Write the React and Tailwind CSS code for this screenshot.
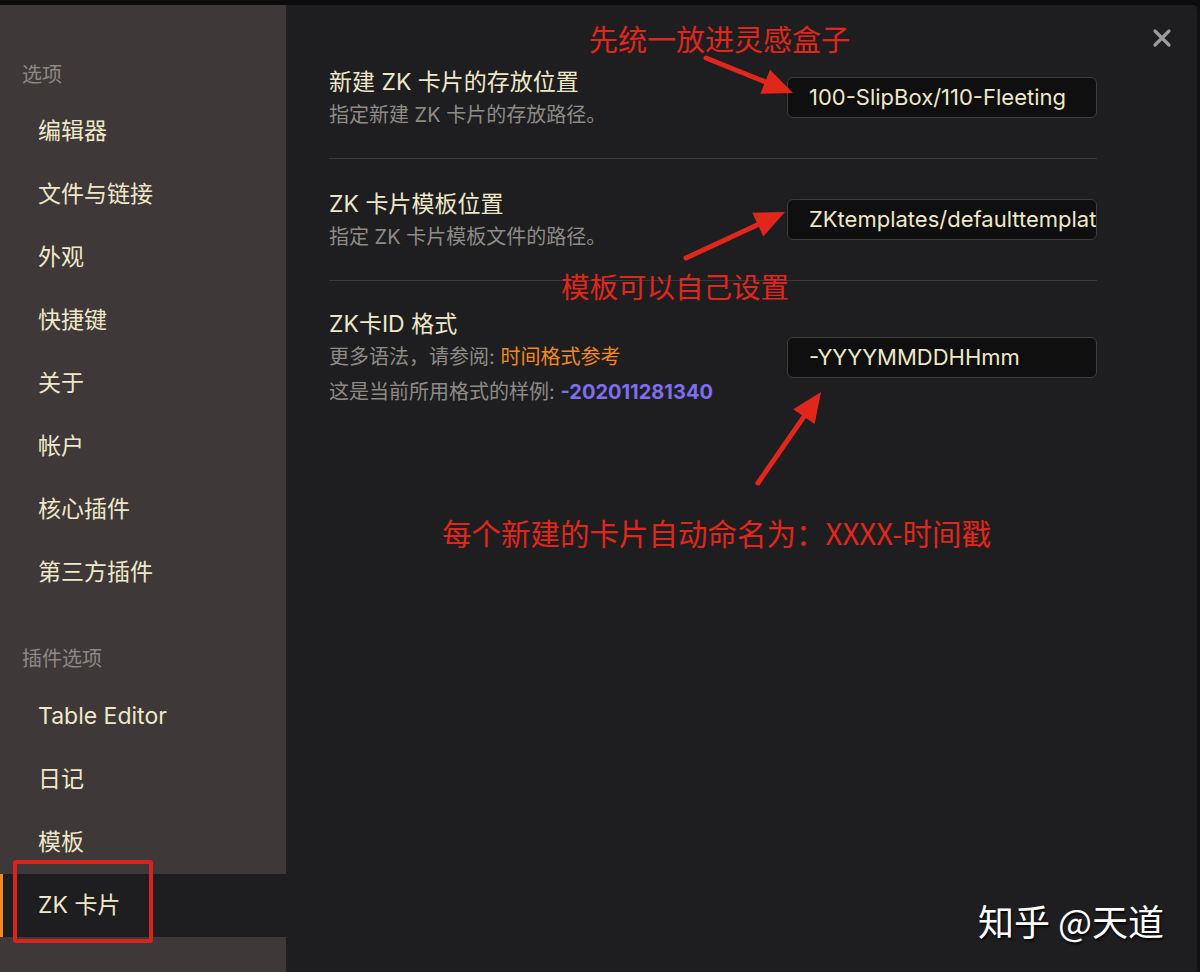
import React from "react";

const FONT = { fontFamily: "Inter, 'Noto Sans CJK SC', sans-serif" };
const CJK = { fontFamily: "'Noto Sans CJK SC', sans-serif" };

function Arrow({ x1, y1, x2, y2 }) {
  const dx = x2 - x1;
  const dy = y2 - y1;
  const len = Math.sqrt(dx * dx + dy * dy);
  const ux = dx / len;
  const uy = dy / len;
  const L = 30;
  const W = 13;
  const bx = x2 - ux * L;
  const by = y2 - uy * L;
  const p1 = `${x2},${y2}`;
  const p2 = `${bx - uy * W},${by + ux * W}`;
  const p3 = `${bx + uy * W},${by - ux * W}`;
  const lx = x2 - ux * (L - 4);
  const ly = y2 - uy * (L - 4);
  return (
    <g>
      <line x1={x1} y1={y1} x2={lx} y2={ly} stroke="#e1261c" strokeWidth="5" strokeLinecap="round" />
      <polygon points={`${p1} ${p2} ${p3}`} fill="#e1261c" />
    </g>
  );
}

function NavItem({ label, active }) {
  return (
    <div
      className={
        "relative h-[63px] flex items-center pl-[38px] text-[23px] text-[#eee8c9] " +
        (active ? "bg-[#1e1e20]" : "")
      }
    >
      {active && <div className="absolute left-0 top-0 h-full w-[3px] bg-[#f08a24]" />}
      {label}
    </div>
  );
}

function Input({ value }) {
  return (
    <div className="w-[310px] h-[41px] rounded-[6px] border border-[#3d3d3d] bg-[#0f0f10] pl-[21px] flex items-center overflow-hidden whitespace-nowrap text-[22px] text-[#eee8c9]">
      {value}
    </div>
  );
}

export default function App() {
  return (
    <div className="relative w-[1200px] h-[972px] bg-[#0c0c0c] flex flex-col overflow-hidden" style={FONT}>
      <div className="h-[5px] shrink-0" />
      <div className="flex flex-1">
        {/* Sidebar */}
        <div className="w-[286px] shrink-0 bg-[#3e3838] flex flex-col">
          <div className="mt-[50px] h-[40px] flex items-center pl-[22px] text-[20px] text-[#8d8885]">选项</div>
          <div className="mt-[5px]">
            {["编辑器", "文件与链接", "外观", "快捷键", "关于", "帐户", "核心插件", "第三方插件"].map((l) => (
              <NavItem key={l} label={l} />
            ))}
          </div>
          <div className="mt-[35px] h-[40px] flex items-center pl-[22px] text-[20px] text-[#8d8885]">插件选项</div>
          <div className="mt-[6px]">
            {["Table Editor", "日记", "模板"].map((l) => (
              <NavItem key={l} label={l} />
            ))}
            <NavItem label="ZK 卡片" active />
          </div>
        </div>

        {/* Main */}
        <div className="flex-1 bg-[#1e1e20] border-r-[3px] border-[#111112] rounded-tr-[6px]">
          <div className="ml-[43px] w-[768px] pt-[32px]">
            <div className="h-[122px] flex items-center justify-between border-b border-[#3a3a3b]">
              <div className="flex flex-col">
                <div className="h-[28px] leading-[28px] text-[23px] text-[#eee8c9]">新建 ZK 卡片的存放位置</div>
                <div className="mt-[6px] h-[26px] leading-[26px] text-[20px] text-[#8e8b87]">指定新建 ZK 卡片的存放路径。</div>
              </div>
              <Input value="100-SlipBox/110-Fleeting" />
            </div>
            <div className="h-[122px] flex items-center justify-between border-b border-[#3a3a3b]">
              <div className="flex flex-col">
                <div className="h-[28px] leading-[28px] text-[23px] text-[#eee8c9]">ZK 卡片模板位置</div>
                <div className="mt-[6px] h-[26px] leading-[26px] text-[20px] text-[#8e8b87]">指定 ZK 卡片模板文件的路径。</div>
              </div>
              <Input value="ZKtemplates/defaulttemplate" />
            </div>
            <div className="flex items-start justify-between pt-[29px]">
              <div className="flex flex-col">
                <div className="h-[28px] leading-[28px] text-[23px] text-[#eee8c9]">ZK卡ID 格式</div>
                <div className="mt-[6px] h-[26px] leading-[26px] text-[20px] text-[#8e8b87]">
                  更多语法，请参阅: <span className="text-[#f0891e]">时间格式参考</span>
                </div>
                <div className="mt-[9px] h-[26px] leading-[26px] text-[20px] text-[#8e8b87]">
                  这是当前所用格式的样例: <span className="font-bold text-[#7f6df2]">-202011281340</span>
                </div>
              </div>
              <div className="mt-[27px]">
                <Input value="-YYYYMMDDHHmm" />
              </div>
            </div>
          </div>
        </div>
      </div>

      {/* Close button */}
      <svg className="absolute left-[1152px] top-[28px]" width="20" height="20" viewBox="0 0 20 20">
        <path d="M3 3 L17 17 M17 3 L3 17" stroke="#9b9b9b" strokeWidth="3.2" strokeLinecap="round" />
      </svg>

      {/* Annotations */}
      <div className="absolute left-[13px] top-[860px] w-[140px] h-[83px] border-[4px] border-[#d8241c] rounded-[3px]" />
      <svg className="absolute left-0 top-0" width="1200" height="972">
        <Arrow x1={706} y1={58} x2={793} y2={93} />
        <Arrow x1={686} y1={258} x2={785} y2={212} />
        <Arrow x1={758} y1={483} x2={821} y2={392} />
      </svg>
      <div className="absolute left-[589px] top-[20px] text-[29px] leading-[36px] text-[#e1261c] whitespace-nowrap" style={CJK}>
        先统一放进灵感盒子
      </div>
      <div className="absolute left-[561px] top-[268px] text-[28.5px] leading-[36px] text-[#e1261c] whitespace-nowrap" style={CJK}>
        模板可以自己设置
      </div>
      <div className="absolute left-[442px] top-[513px] text-[29.5px] leading-[38px] text-[#e1261c] whitespace-nowrap" style={CJK}>
        每个新建的卡片自动命名为：XXXX-时间戳
      </div>
      <div
        className="absolute left-[978px] top-[897px] text-[36px] leading-[46px] text-white whitespace-nowrap [text-shadow:1px_2px_2px_rgba(0,0,0,0.8)]"
        style={CJK}
      >
        知乎 @天道
      </div>
    </div>
  );
}
